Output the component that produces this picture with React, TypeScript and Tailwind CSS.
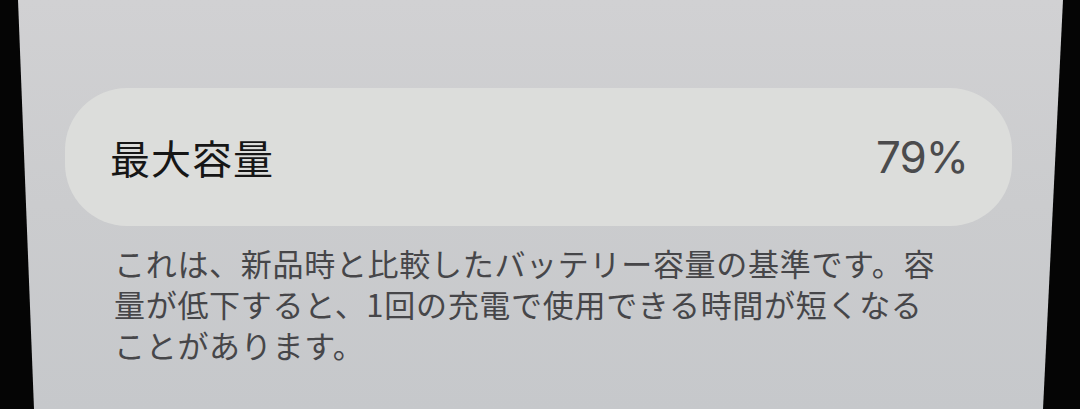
export default function App() {
    return (
        <div className="w-[1080px] h-[409px] bg-[#050505] overflow-hidden">
            {/* Screen (photo is slightly skewed, so the edges lean) */}
            <div
                className="ml-[18px] w-[1045px] h-full bg-gradient-to-b from-[#d1d1d3] via-[#cbccce] to-[#c6c8cb] [clip-path:polygon(0_0,1045px_0,1025px_100%,16px_100%)] pt-[88px]"
                style={{ fontFamily: '"Noto Sans CJK JP", "Noto Sans", sans-serif' }}
            >
                {/* Row card */}
                <div className="ml-[47px] w-[947px] h-[138px] rounded-[62px] bg-[#dcdddb] flex items-center justify-between pl-[45px] pr-[44px]">
                    <span className="text-[40px] leading-none text-[#161616] tracking-[1px]">最大容量</span>
                    <span className="text-[44px] leading-none text-[#4b4b4d] font-['Inter',sans-serif] tracking-[-1px]">79%</span>
                </div>

                {/* Footer explanation */}
                <p className="ml-[96px] mt-[16px] text-[31px] leading-[41px] text-[#464649] tracking-[0.7px]">
                    これは、新品時と比較したバッテリー容量の基準です。容
                    <br />
                    量が低下すると、1回の充電で使用できる時間が短くなる
                    <br />
                    ことがあります。
                </p>
            </div>
        </div>
    );
}
